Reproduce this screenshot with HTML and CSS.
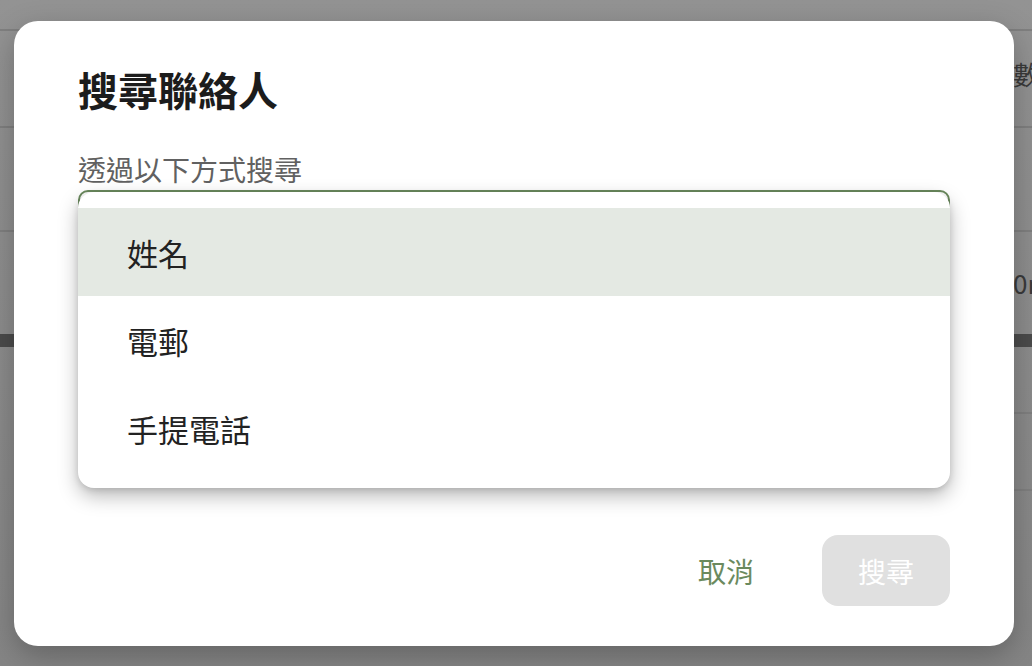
FILE: index.html
```html
<!DOCTYPE html>
<html lang="zh-Hant">
<head>
    <meta charset="UTF-8">
    <meta name="viewport" content="width=device-width, initial-scale=1.0">
    <title>搜尋聯絡人</title>
    <link rel="stylesheet" href="styles.css">
</head>
<body>
    <div class="page">
        <div class="page-row row-top"></div>
        <div class="page-row row-head"><span class="cell">數</span></div>
        <div class="page-row row-mid"></div>
        <div class="page-row row-data"><span class="cell">0n</span></div>
        <div class="page-band"></div>
        <div class="page-row row-list"></div>
        <div class="page-row row-list2"></div>
    </div>

    <div class="dialog">
        <h2 class="dialog-title">搜尋聯絡人</h2>
        <label class="field-label">透過以下方式搜尋</label>
        <div class="field">
            <ul class="menu">
                <li class="menu-item selected">姓名</li>
                <li class="menu-item">電郵</li>
                <li class="menu-item">手提電話</li>
            </ul>
        </div>
        <div class="actions">
            <button class="btn btn-text">取消</button>
            <button class="btn btn-primary" disabled>搜尋</button>
        </div>
    </div>
</body>
</html>
```

FILE: styles.css
```css
body {
    margin: 0;
    padding: 0;
    width: 1032px;
    height: 666px;
    overflow: hidden;
    font-family: "Noto Sans CJK TC", "Noto Sans", sans-serif;
    background: linear-gradient(#939393, #858585);
    position: relative;
}

/* dimmed page behind the dialog */
.page {
    display: flex;
    flex-direction: column;
}

.page-row {
    border-bottom: 2px solid #7f7f7f;
    box-sizing: border-box;
    display: flex;
    align-items: center;
    padding-left: 1013px;
}

.row-top {
    height: 31px;
}

.row-head {
    height: 97px;
    padding-bottom: 10px;
}

.row-mid {
    height: 104px;
}

.row-data {
    height: 102px;
    border-bottom: none;
}

.cell {
    font-size: 26px;
    line-height: 30px;
    color: #3a3a3a;
    white-space: nowrap;
}

.page-band {
    height: 13px;
    background-color: #4b4b4b;
}

.row-list {
    height: 67px;
    margin-left: 40px;
}

.row-list2 {
    height: 77px;
    margin-left: 40px;
}

/* dialog */
.dialog {
    position: absolute;
    left: 14px;
    top: 21px;
    width: 1000px;
    height: 625px;
    box-sizing: border-box;
    background-color: white;
    border-radius: 24px;
    box-shadow: 0 10px 30px rgba(0, 0, 0, 0.25);
    padding: 44px 64px 40px 64px;
    display: flex;
    flex-direction: column;
}

.dialog-title {
    margin: 0;
    font-size: 40px;
    line-height: 48px;
    font-weight: 700;
    color: #1c1c1c;
}

.field-label {
    margin-top: 38px;
    font-size: 28px;
    line-height: 36px;
    color: #616161;
}

.field {
    position: relative;
    margin-top: 3px;
    height: 58px;
    border: 2px solid #6b8a5e;
    border-radius: 10px;
}

.menu {
    position: absolute;
    top: 0;
    left: -2px;
    right: -2px;
    margin: 0;
    padding: 16px 0;
    list-style: none;
    background-color: white;
    border-radius: 16px;
    box-shadow: 0 8px 20px rgba(0, 0, 0, 0.28), 0 2px 6px rgba(0, 0, 0, 0.12);
}

.menu-item {
    height: 88px;
    padding-left: 49px;
    display: flex;
    align-items: center;
    font-size: 31px;
    color: #222;
}

.menu-item.selected {
    background-color: #e4e9e3;
}

.actions {
    margin-top: auto;
    display: flex;
    justify-content: flex-end;
    align-items: center;
    gap: 68px;
}

.btn {
    font-family: inherit;
    font-size: 28px;
    border: none;
    cursor: pointer;
}

.btn-text {
    background: none;
    color: #6b8a5e;
    padding: 0;
}

.btn-primary {
    width: 128px;
    height: 71px;
    border-radius: 16px;
    background-color: #e0e0e0;
    color: white;
}
```
